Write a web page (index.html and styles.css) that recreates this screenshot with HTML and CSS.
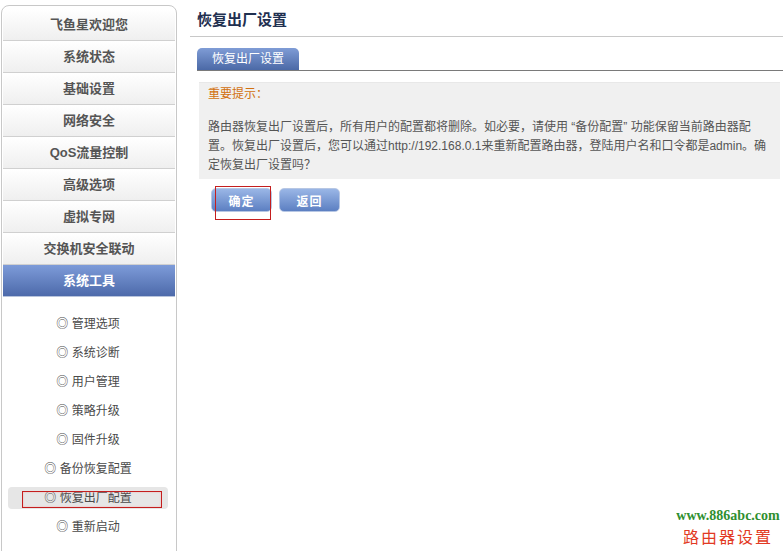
FILE: index.html
```html
<!DOCTYPE html>
<html lang="zh-CN">
<head>
    <meta charset="UTF-8">
    <link rel="stylesheet" href="styles.css">
    <title>恢复出厂设置</title>
</head>
<body>
    <div class="page">
        <div class="sidebar">
            <div class="menu-item">飞鱼星欢迎您</div>
            <div class="menu-item">系统状态</div>
            <div class="menu-item">基础设置</div>
            <div class="menu-item">网络安全</div>
            <div class="menu-item">QoS流量控制</div>
            <div class="menu-item">高级选项</div>
            <div class="menu-item">虚拟专网</div>
            <div class="menu-item">交换机安全联动</div>
            <div class="menu-item active">系统工具</div>
            <ul class="sub-menu">
                <li>◎ 管理选项</li>
                <li>◎ 系统诊断</li>
                <li>◎ 用户管理</li>
                <li>◎ 策略升级</li>
                <li>◎ 固件升级</li>
                <li>◎ 备份恢复配置</li>
                <li class="current">◎ 恢复出厂配置<span class="mark mark-menu"></span></li>
                <li>◎ 重新启动</li>
            </ul>
        </div>

        <div class="main">
            <h1 class="title">恢复出厂设置</h1>
            <div class="tabs">
                <div class="tab">恢复出厂设置</div>
            </div>
            <div class="notice">
                <div class="notice-head">重要提示：</div>
                <p class="notice-text">路由器恢复出厂设置后，所有用户的配置都将删除。如必要，请使用 “备份配置” 功能保留当前路由器配置。恢复出厂设置后，您可以通过http://192.168.0.1来重新配置路由器，登陆用户名和口令都是admin。确定恢复出厂设置吗？</p>
            </div>
            <div class="actions">
                <button class="btn">确定<span class="mark mark-btn"></span></button>
                <button class="btn">返回</button>
            </div>
        </div>
    </div>

    <div class="watermark">
        <div class="wm-url">www.886abc.com</div>
        <div class="wm-name">路由器设置</div>
    </div>
</body>
</html>
```

FILE: styles.css
```css
body {
    margin: 0;
    padding: 0;
    background-color: #fff;
    font-family: 'Liberation Sans', 'Noto Sans CJK SC', sans-serif;
    font-size: 12px;
    color: #555;
}

.page {
    display: flex;
    align-items: flex-start;
    padding: 5px 0 0 1px;
    height: 546px;
    overflow: hidden;
}

.sidebar {
    width: 176px;
    height: 560px;
    border: 1px solid #c8c8c8;
    border-radius: 8px 8px 0 0;
    padding: 3px 1px 0 1px;
    box-sizing: border-box;
    flex-shrink: 0;
}

.menu-item {
    height: 31px;
    line-height: 32px;
    border-bottom: 1px solid #d0d0d0;
    text-align: center;
    font-size: 13px;
    font-weight: bold;
    color: #555;
    background: linear-gradient(#ffffff, #efefef);
}

.menu-item:first-child {
    border-radius: 6px 6px 0 0;
}

.menu-item.active {
    color: #fff;
    background: linear-gradient(#7d9bd9, #4d6aaa);
    border-bottom-color: #b8c4dc;
}

.sub-menu {
    list-style: none;
    margin: 0;
    padding: 16px 0 0 0;
}

.sub-menu li {
    position: relative;
    height: 22px;
    line-height: 22px;
    margin: 0 7px 7px 5px;
    text-align: center;
    color: #4a4a4a;
    font-size: 12px;
}

.sub-menu li.current {
    background-color: #e6e6e6;
    border-radius: 4px;
}

.mark {
    position: absolute;
    border: 1px solid #c41e1e;
    box-shadow: inset 0 0 2px #f4b0b0;
}

.mark-menu {
    left: 14px;
    top: 4px;
    width: 138px;
    height: 15px;
}

.mark-btn {
    left: 3px;
    top: -3px;
    width: 54px;
    height: 32px;
    box-shadow: none;
}

.main {
    flex: 1;
    padding-left: 13px;
}

.title {
    margin: 6px 0 0 0;
    padding: 0 0 7px 7px;
    font-size: 15px;
    line-height: 18px;
    color: #1f3050;
    border-bottom: 1px solid #c8c8c8;
}

.tabs {
    margin-top: 11px;
    margin-left: 7px;
    border-bottom: 1px solid #7a7a7a;
    display: flex;
}

.tab {
    width: 102px;
    height: 22px;
    line-height: 22px;
    text-align: center;
    color: #fff;
    font-size: 12px;
    border-radius: 5px 5px 0 0;
    background: linear-gradient(#7f9cd6, #4b69a6);
}

.notice {
    margin: 11px 3px 0 9px;
    padding: 2px 10px 4px 9px;
    background-color: #f0f0f0;
    border-top: 1px solid #e8e8e8;
}

.notice-head {
    color: #d2700e;
    line-height: 18px;
}

.notice-text {
    margin: 15px 0 0 0;
    line-height: 19px;
    color: #555;
}

.actions {
    display: flex;
    gap: 7px;
    margin: 9px 0 0 21px;
}

.btn {
    position: relative;
    width: 61px;
    height: 24px;
    padding: 0;
    border: 1px solid #b7c7e4;
    border-radius: 5px;
    background: linear-gradient(#9ab6e6, #5c7fc2);
    color: #fff;
    font-family: 'Liberation Sans', 'Noto Sans CJK SC', sans-serif;
    font-size: 12px;
    font-weight: bold;
    letter-spacing: 1px;
}

.watermark {
    position: absolute;
    left: 672px;
    top: 508px;
    width: 112px;
    text-align: center;
}

.wm-url {
    font-family: 'Liberation Serif', serif;
    font-weight: bold;
    font-size: 14px;
    color: #2f8f2f;
}

.wm-name {
    margin-top: 0;
    font-family: 'Noto Sans CJK SC', serif;
    font-size: 16px;
    color: #e23a24;
    letter-spacing: 2px;
}
```
